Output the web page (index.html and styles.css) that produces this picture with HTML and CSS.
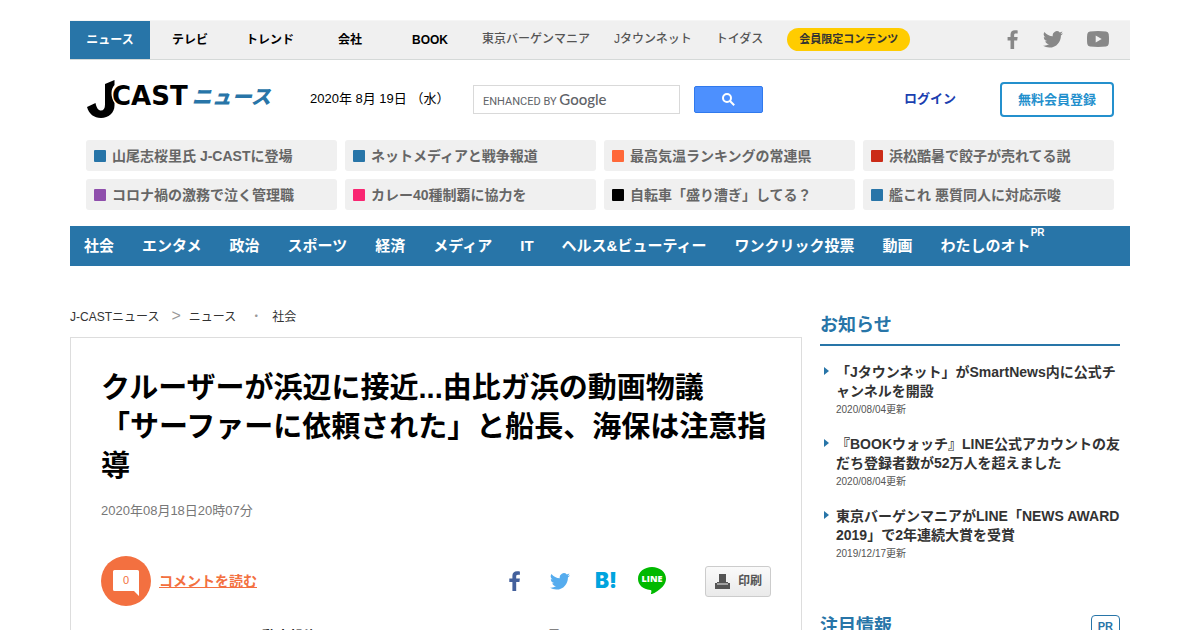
FILE: index.html
```html
<!DOCTYPE html>
<html lang="ja">
<head>
<meta charset="utf-8">
<meta name="viewport" content="width=device-width, initial-scale=1">
<title>J-CAST ニュース</title>
<link rel="stylesheet" href="styles.css">
</head>
<body>
<svg class="defs" aria-hidden="true">
  <symbol id="fb" viewBox="0 0 12 20"><path d="M3.4 20V11H.3V7.4h3.1V4.8C3.400 1.700 5.200.200 8 .200c1.300 0 2.500.100 2.900.200v3.300H9c-1.500 0-1.800.700-1.800 1.800v1.900h3.700L10.400 11H7.200v9z"/></symbol>
  <symbol id="tw" viewBox="0 0 24 20"><path d="M24 2.400a9.800 9.800 0 0 1-2.800.800A4.900 4.900 0 0 0 23.300.500a9.900 9.900 0 0 1-3.100 1.200 4.900 4.900 0 0 0-8.400 4.500A14 14 0 0 1 1.700 1 4.900 4.900 0 0 0 3.200 7.600 4.900 4.900 0 0 1 1 7v.100a4.900 4.900 0 0 0 3.900 4.800 4.900 4.900 0 0 1-2.200.100 4.900 4.900 0 0 0 4.600 3.400A9.900 9.900 0 0 1 0 17.500 14 14 0 0 0 7.500 19.700c9.100 0 14-7.500 14-14v-.600A10 10 0 0 0 24 2.400z"/></symbol>
</svg>
<div class="page">
  <nav class="topbar" aria-label="J-CASTサービス">
    <a class="tab tab-active" href="#">ニュース</a>
    <a class="tab" href="#">テレビ</a>
    <a class="tab" href="#">トレンド</a>
    <a class="tab" href="#">会社</a>
    <a class="tab" href="#">BOOK</a>
    <div class="partners">
      <a href="#">東京バーゲンマニア</a>
      <a href="#">Jタウンネット</a>
      <a href="#">トイダス</a>
      <a class="pill" href="#">会員限定コンテンツ</a>
    </div>
    <div class="social">
      <a href="#" aria-label="Facebook"><svg width="12" height="19"><use href="#fb"/></svg></a>
      <a href="#" aria-label="Twitter"><svg width="20" height="17"><use href="#tw"/></svg></a>
      <a href="#" aria-label="YouTube"><svg width="22" height="16" viewBox="0 0 22 16"><path fill-rule="evenodd" d="M3 .500Q11-.400 19 .500 21.300.700 21.700 3q.600 5 0 10-.400 2.300-2.700 2.500-8 .900-16 0Q.700 15.300.300 13-.300 8 .300 3 .700.700 3 .500zM8.700 4.500v7l6-3.500z"/></svg></a>
    </div>
  </nav>

  <header class="header">
    <a class="logo" href="#">
      <svg class="logo-mark" width="28" height="40" viewBox="0 0 28 40" aria-label="J"><path d="M18 5 27.500 1v5C23.500 10 23.500 18 27.500 24v2.500C27.500 34 21.500 39 14 39 7 39 2 35 0 28l8.500-4c1 5 3 7.500 5.500 7.500s4-2 4-6z"/></svg>
      <span class="logo-cast">CAST</span><span class="logo-news">ニュース</span>
    </a>
    <time class="today" datetime="2020-08-19">2020年 8月 19日 （水）</time>
    <form class="search">
      <div class="search-box">
        <input id="q" type="text" aria-label="検索">
        <label class="search-brand" for="q">ENHANCED BY <span>Google</span></label>
      </div>
      <button type="button" aria-label="検索"><svg class="glass" width="13" height="13" viewBox="0 0 13 13"><circle cx="5" cy="5" r="4"/><path d="m8 8 4.200 4.200"/></svg></button>
    </form>
    <div class="account">
      <a class="login" href="#">ログイン</a>
      <a class="register" href="#">無料会員登録</a>
    </div>
  </header>

  <div class="topics">
    <a class="topic blue" href="#">山尾志桜里氏 J-CASTに登場</a>
    <a class="topic blue" href="#">ネットメディアと戦争報道</a>
    <a class="topic orange" href="#">最高気温ランキングの常連県</a>
    <a class="topic red" href="#">浜松酷暑で餃子が売れてる説</a>
    <a class="topic purple" href="#">コロナ禍の激務で泣く管理職</a>
    <a class="topic pink" href="#">カレー40種制覇に協力を</a>
    <a class="topic black" href="#">自転車「盛り漕ぎ」してる？</a>
    <a class="topic blue" href="#">艦これ 悪質同人に対応示唆</a>
  </div>

  <nav class="genres" aria-label="ジャンル">
    <a href="#">社会</a><a href="#">エンタメ</a><a href="#">政治</a><a href="#">スポーツ</a><a href="#">経済</a><a href="#">メディア</a><a href="#">IT</a><a href="#">ヘルス&amp;ビューティー</a><a href="#">ワンクリック投票</a><a href="#">動画</a><a class="sponsored" href="#">わたしのオト<span class="pr-mark">PR</span></a>
  </nav>

  <div class="columns">
    <main class="main">
      <nav class="crumbs" aria-label="パンくず">
        <a href="#">J-CASTニュース</a><span class="sep-arrow">&gt;</span><a href="#">ニュース</a><span class="sep-dot">・</span><a href="#">社会</a>
      </nav>
      <article class="article">
        <h1>クルーザーが浜辺に接近...由比ガ浜の動画物議<br>「サーファーに依頼された」と船長、海保は注意指導</h1>
        <time class="published" datetime="2020-08-18T20:07">2020年08月18日20時07分</time>
        <div class="actions">
          <a class="comments" href="#">
            <span class="comment-badge"><svg width="26" height="26" viewBox="0 0 26 26"><path d="M1.500 0h23Q26 0 26 1.500V26l-5-5H1.500Q0 21 0 19.500v-18Q0 0 1.500 0z"/></svg><span class="comment-count">0</span></span>
            <span class="comment-label">コメントを読む</span>
          </a>
          <div class="share">
            <a class="s-fb" href="#" aria-label="Facebook"><svg width="12" height="20"><use href="#fb"/></svg></a>
            <a class="s-tw" href="#" aria-label="Twitter"><svg width="20" height="17"><use href="#tw"/></svg></a>
            <a class="s-hatena" href="#">B!</a>
            <a class="s-line" href="#"><svg width="28" height="28" viewBox="0 0 28 28"><path fill="#00b900" d="M14 0c7.700 0 14 5 14 11.800 0 2.900-1.100 5.400-3.400 7.900-3 3.200-7.900 6.300-10.600 7.400l-1.100-.200c.600-2.500 1-3.700-.600-3.900C5 22.200 0 18 0 11.800 0 5 6.300 0 14 0z"/><text x="14" y="15" text-anchor="middle" class="line-text">LINE</text></svg></a>
            <button class="print" type="button"><svg width="15" height="15" viewBox="0 0 15 15"><path d="M4 0h7v8h2V9h2v6H0V9h2V8h2z"/><path class="print-slot" d="M2 9.500h11v1H2z"/></svg>印刷</button>
          </div>
        </div>
        <p class="lead"><span>不動産投資</span><span>号</span></p>
      </article>
    </main>

    <aside class="side">
      <section>
        <h2>お知らせ</h2>
        <ul class="notices">
          <li><a href="#">「Jタウンネット」がSmartNews内に公式チャンネルを開設</a><time>2020/08/04更新</time></li>
          <li><a href="#">『BOOKウォッチ』LINE公式アカウントの友だち登録者数が52万人を超えました</a><time>2020/08/04更新</time></li>
          <li><a href="#">東京バーゲンマニアがLINE「NEWS AWARD 2019」で2年連続大賞を受賞</a><time>2019/12/17更新</time></li>
        </ul>
      </section>
      <section>
        <h2>注目情報<span class="pr-box">PR</span></h2>
      </section>
    </aside>
  </div>
</div>
</body>
</html>
```
FILE: styles.css
```css
* { box-sizing: border-box; }
body {
  margin: 0;
  background: #fff;
  color: #000;
  font: 13px/20px "Liberation Sans", "Noto Sans CJK JP", sans-serif;
}
a { color: inherit; text-decoration: none; }
svg { display: block; fill: currentColor; }
h1, h2, p, ul { margin: 0; padding: 0; }
.defs { position: absolute; width: 0; height: 0; }
.page { max-width: 1100px; margin: 0 auto; padding: 20px 20px 0; }

/* Service bar */
.topbar {
  display: flex;
  height: 40px;
  background: #f0f0f0;
  border-bottom: 1px solid #d5d9d8;
  border-top: 1px solid #f5f5f5;
  font-size: 12px;
}
.tab { width: 80px; line-height: 38px; text-align: center; font-weight: bold; }
.tab-active { background: #2875a8; color: #fff; }
.partners {
  display: flex;
  align-items: center;
  gap: 24px;
  height: 36px;
  margin-left: 12px;
  color: #555;
  font-weight: 500;
}
.pill {
  padding: 0 12px;
  border-radius: 12px;
  background: #fc0;
  color: #333;
  font-size: 11px;
  font-weight: bold;
  line-height: 23px;
}
.social { display: flex; align-items: center; gap: 24px; height: 36px; margin-left: auto; padding-right: 21px; color: #888; }

/* Header */
.header { display: flex; align-items: center; height: 78px; margin-bottom: 2px; padding: 0 16px; }
.logo { display: flex; align-items: center; width: 224px; white-space: nowrap; }
.logo-mark { margin-left: 1px; flex: none; }
.logo-cast { margin: -6px 0 0 -3px; font: 900 26px/24px "DejaVu Sans", sans-serif; }
.logo-news {
  margin: -6px 0 0 4px;
  color: #2875a8;
  font: italic 900 20px/24px "Noto Sans CJK JP", sans-serif;
}
.today { width: 163px; }
.search { display: flex; align-items: center; gap: 14px; }
.search-box { position: relative; }
.search input {
  display: block;
  width: 207px;
  height: 29px;
  padding: 0 8px;
  border: 1px solid #d9d9d9;
  background: #fff;
  font-size: 13px;
}
.search-brand {
  position: absolute;
  top: 0;
  left: 10px;
  color: #5f6368;
  font: 11px/29px Roboto, sans-serif;
  white-space: nowrap;
  pointer-events: none;
}
.search-brand span { font: 500 15px/29px Lato, sans-serif; }
.search button {
  display: grid;
  place-items: center;
  width: 69px;
  height: 27px;
  padding: 0;
  border: 1px solid #3079ed;
  border-radius: 2px;
  background: #4d90fe;
}
.glass { fill: none; stroke: #fff; stroke-width: 2; }
.account { display: flex; align-items: center; gap: 44px; margin-left: auto; font-weight: bold; }
.login { color: #1a3fb0; }
.register {
  padding: 0 16px;
  border: 2px solid #2490cd;
  border-radius: 4px;
  color: #2490cd;
  line-height: 31px;
}

/* Topics */
.topics { display: grid; grid-template-columns: repeat(4, 1fr); gap: 8px; padding: 0 16px; }
.topic {
  display: flex;
  align-items: center;
  gap: 6px;
  height: 31px;
  padding: 0 8px;
  border-radius: 3px;
  background: #f0f0f0;
  color: #666;
  font-size: 14px;
  font-weight: bold;
  white-space: nowrap;
}
.topic::before { content: ""; width: 12px; height: 12px; border-radius: 1px; background: #2875a8; }
.orange::before { background: #ff6839; }
.red::before { background: #cb2b17; }
.purple::before { background: #8f4fac; }
.pink::before { background: #f92672; }
.black::before { background: #000; }

/* Genres */
.genres {
  display: flex;
  margin-top: 16px;
  background: #2875a8;
  color: #fff;
  font-size: 15px;
  font-weight: bold;
  line-height: 40px;
}
.genres a { padding: 0 14px; white-space: nowrap; }
.sponsored { position: relative; }
.pr-mark { position: absolute; top: 0; right: 0; font-size: 10px; line-height: 14px; }

/* Columns */
.columns { display: flex; gap: 18px; padding: 40px 10px 0 0; }
.main { flex: 1; min-width: 0; }
.side { width: 300px; }
.crumbs { display: flex; align-items: center; height: 21px; color: #333; font-size: 12px; }
.sep-arrow { padding: 0 8px 2px 12px; color: #999; font-size: 16px; }
.sep-dot { width: 36px; padding-left: 14px; color: #999; }
.article { margin-top: 10px; padding: 31px 30px 20px; border: 1px solid #ddd; }
h1 { font-size: 29px; font-weight: bold; line-height: 39px; }
.published { display: block; margin-top: 15px; color: #777; }
.actions { display: flex; align-items: center; justify-content: space-between; margin-top: 35px; }
.comments { display: flex; align-items: center; gap: 8px; color: #f37040; }
.comment-badge {
  position: relative;
  display: grid;
  place-items: center;
  width: 50px;
  height: 50px;
  padding-top: 3px;
  border-radius: 50%;
  background: #f37040;
}
.comment-badge svg { fill: #fff; }
.comment-count { position: absolute; top: 14px; left: 0; width: 50px; font-size: 11px; text-align: center; }
.comment-label { font-size: 14px; font-weight: bold; text-decoration: underline; }
.share { display: flex; align-items: center; }
.s-fb { color: #43609c; }
.s-tw { margin-left: 29px; color: #55acee; }
.s-hatena { margin-left: 25px; color: #00a4de; font: 900 21px/24px Inter, sans-serif; }
.s-line { margin-left: 21px; }
.line-text { fill: #fff; font: 900 9px "Open Sans", sans-serif; }
.print {
  display: flex;
  align-items: center;
  gap: 8px;
  height: 31px;
  margin-left: 39px;
  padding: 0 8px 0 9px;
  border: 1px solid #ccc;
  border-radius: 3px;
  background: linear-gradient(#fafafa, #eaeaea);
  color: #555;
  font: bold 12px/20px "Liberation Sans", "Noto Sans CJK JP", sans-serif;
}
.print-slot { fill: #f0f0f0; }
.lead { display: flex; gap: 229px; margin-top: 20px; padding-left: 147px; color: #222; font-size: 14px; font-weight: bold; }

/* Sidebar */
h2 {
  display: flex;
  align-items: center;
  justify-content: space-between;
  padding: 5px 0;
  border-bottom: 2px solid #2875a8;
  color: #2875a8;
  font-size: 18px;
  line-height: 28px;
}
.notices { padding: 17px 0 28px; list-style: none; }
.notices li { position: relative; padding-left: 16px; margin-bottom: 16px; }
.notices li::before {
  content: "";
  position: absolute;
  top: 4px;
  left: 4px;
  border: 4px solid transparent;
  border-left: 5px solid #2875a8;
  border-right: 0;
}
.notices a { display: block; color: #333; font-size: 14px; font-weight: bold; line-height: 19px; }
.notices time { display: block; color: #555; font-size: 10px; line-height: 18px; }
.pr-box { padding: 0 6px; border: 1px solid #2875a8; border-radius: 4px; font-size: 11px; line-height: 20px; }
```
